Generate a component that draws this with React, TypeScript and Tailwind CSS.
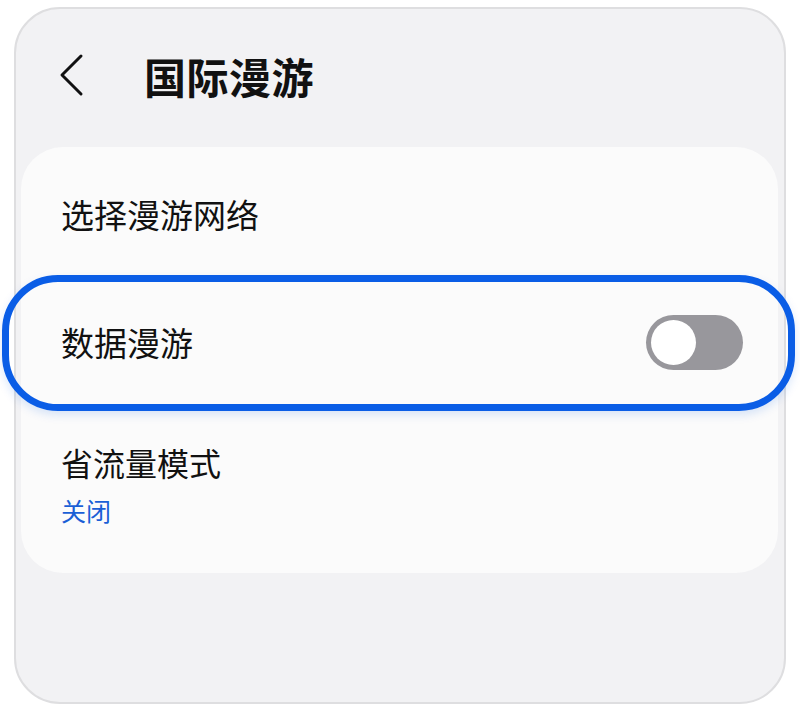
import React from 'react';

const font = { fontFamily: '"Noto Sans CJK SC", "Noto Sans", sans-serif' };

export default function App() {
  return (
    <div className="w-[800px] h-[713px] bg-white overflow-hidden" style={font}>
      <div className="ml-[14px] mt-[7px] w-[772px] h-[697px] rounded-[46px] border-2 border-[#dedee0] bg-[#f2f2f4] flex flex-col">
        <header className="h-[138px] flex items-center pl-[41px]">
          <svg width="28" height="44" viewBox="0 0 28 44" className="mt-[-6px]" fill="none">
            <path d="M24 3 L5 22 L24 41" stroke="#111" strokeWidth="3" strokeLinecap="round" strokeLinejoin="round" />
          </svg>
          <h1 className="ml-[59px] mt-[-4px] text-[42px] font-bold text-[#111] leading-none tracking-[0.5px]">国际漫游</h1>
        </header>

        <section className="ml-[5px] w-[757px] rounded-[42px] bg-[#fbfbfb] flex flex-col">
          <div className="h-[136px] flex items-center pl-[40px] pb-[2px]">
            <span className="text-[33px] text-[#111] leading-none">选择漫游网络</span>
          </div>

          <div className="relative h-[122px] flex items-center justify-between pl-[40px] pr-[35px]">
            <div className="absolute top-[-8px] bottom-[-6px] left-[-19px] right-[-17px] rounded-[56px] border-[7px] border-[#0a5de6] shadow-[0_4px_10px_rgba(10,93,230,0.15)] pointer-events-none" />
            <span className="text-[33px] text-[#111] leading-none mt-[-3px]">数据漫游</span>
            <div className="w-[97px] h-[55px] rounded-full bg-[#98979c] flex items-center pl-[5px] mt-[-4px]">
              <div className="w-[45px] h-[45px] rounded-full bg-white" />
            </div>
          </div>

          <div className="h-[168px] flex flex-col pl-[40px] pt-[35px]">
            <span className="text-[32px] text-[#111] leading-[44px]">省流量模式</span>
            <span className="mt-[9px] text-[25px] text-[#1a5fd6] leading-[34px]">关闭</span>
          </div>
        </section>
      </div>
    </div>
  );
}
